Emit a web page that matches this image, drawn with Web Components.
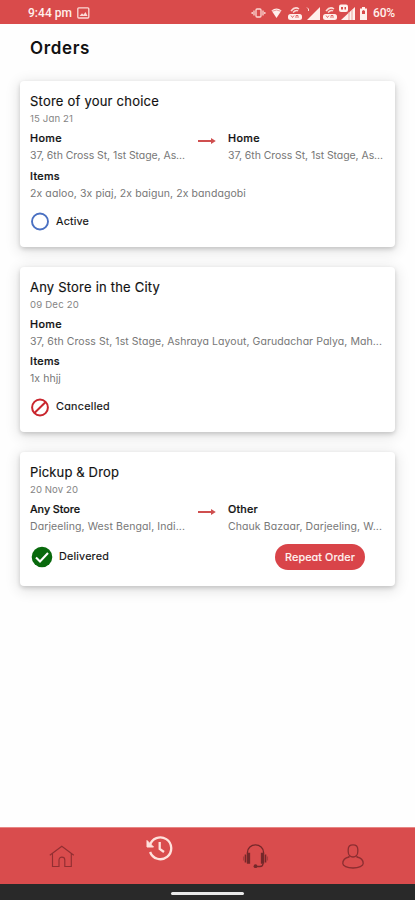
<!DOCTYPE html>
<html lang="en"><head><meta charset="utf-8"><title>Orders</title>
<style>
html,body{margin:0;height:100%;background:#fefefe}
body{font-family:Inter,"Open Sans",sans-serif;font-feature-settings:"cv11" 1;color:#111;overflow:hidden}
</style></head><body>
<orders-app></orders-app>
<script>
const define=(name,html,init)=>customElements.define(name,class extends HTMLElement{
  constructor(){super();this.attachShadow({mode:'open'}).innerHTML=html;}
  connectedCallback(){if(init)init.call(this);}
});

/* Single line of text, tracked to fill the width in the "w" attribute. */
define('track-text','<style>:host{display:block;white-space:nowrap}span{display:inline-block}</style><span></span>',function(){
  const s=this.shadowRoot.querySelector('span');s.textContent=this.getAttribute('text');
  const w=+this.getAttribute('w');
  if(w){this.style.width=w+'px';s.style.letterSpacing=((w-s.getBoundingClientRect().width)/s.textContent.length)+'px';}
});

define('status-bar',`<style>
:host{display:flex;height:24px;flex:none;background:#d94b4b;color:#fff0ec;align-items:center;padding:1px 20px 0 28px;box-sizing:border-box;font:500 12px Roboto,sans-serif}
svg{display:block;flex:none}.i{margin-left:5px}.sp{flex:1}.pct{margin-left:3px}
</style><track-text w="44" text="9:44 pm"></track-text>
<svg class="i" width="13" height="12" viewBox="0 0 13 12"><rect x=".8" y=".8" width="11" height="10.2" rx="1" fill="none" stroke="#fbd9d5" stroke-width="1.3"/><path d="M2.5 9 5 6.2l1.5 1.5L8.500 5 10.500 9z" fill="#fbd9d5"/></svg>
<span class="sp"></span>
<svg width="119" height="20" viewBox="0 0 119 20" fill="#fff0ec">
<g fill="none" stroke="#fbd9d5" stroke-width="1.3"><rect x="5" y="6" width="5" height="8" rx="1"/><path d="M3 7.500v5M12 7.500v5M1.200 9v2M13.800 9v2"/></g>
<path d="M20.500 7.500q5-4 10 0l-5 7.500z"/><path d="M21 8.300q4.500-2.500 9 0" stroke="#e99" fill="none"/>
<g id="v"><rect x="37" y="11" width="14" height="6" rx="2.500"/><path d="m40 12.500 1.500 2 1.500-2m2 2.500v-2.500h2v2.500" fill="none" stroke="#d94b4b" stroke-width=".8"/><path d="M40 8q4-5 8-2M42 9.500q3-3 5-1.500" fill="none" stroke="#fbd9d5" stroke-width="1.500"/></g>
<path d="M69 4v13H56z"/><path d="M56 4.500 57.500 6v2" stroke="#fbd9d5" fill="none"/>
<use href="#v" x="35"/>
<path d="M104 4v13H90z"/><path d="M98 9v8M101 7v10" stroke="#e9a09a"/><rect x="88" y="1.500" width="9" height="7.500" rx="2"/><path d="M90 4h2v2.500h-2zm3.500 0h1.500v2.500h-1.500z" fill="#d94b4b"/>
<path d="M109 5.500h2V4h3v1.500h2v11.500h-7z"/><path d="m111 8 1.500-1 1.500 1v3h-3z" fill="#d94b4b"/>
</svg><track-text class="pct" w="22" text="60%"></track-text>`);

define('status-icon','<style>:host{display:block}svg{display:block}</style><div></div>',function(){
  this.shadowRoot.querySelector('div').innerHTML={
  active:'<svg width="21" height="20"><circle cx="10" cy="10.500" r="8" fill="none" stroke="#4a70c2" stroke-width="1.900"/></svg>',
  cancelled:'<svg width="21" height="20"><g fill="none" stroke="#c9262e" stroke-width="2"><circle cx="10" cy="10.500" r="7.900"/><path d="M4.700 15.800 15.400 5.200"/></g></svg>',
  delivered:'<svg width="24" height="22"><circle cx="12" cy="11" r="10.300" fill="#08690c"/><path d="m6 11.500 4 4 8-8.500" fill="none" stroke="#fff" stroke-width="2.100"/></svg>'}[this.getAttribute('kind')];
});

/* A named address: bold label over a grey line. */
define('place-line',`<style>:host{display:block}.l{font:500 10.800px/16px Inter,sans-serif;font-feature-settings:"cv11" 1;-webkit-text-stroke:.2px #111}.a{font-size:10.500px;line-height:16px;margin-top:1px;color:#777}</style>
<div class="b"></div>`,function(){
  const g=n=>this.getAttribute(n);
  this.shadowRoot.querySelector('.b').innerHTML=`<track-text class="l" w="${g('lw')}" text="${g('label')}"></track-text><track-text class="a" w="${g('aw')}" text="${g('address')}"></track-text>`;
});

define('route-arrow','<style>:host{display:block}svg{display:block}</style><svg width="19" height="8"><path d="M0 2.900h13V.9l4.800 3.100L13 7.100V5.100H0z" fill="#cf4f4f"/></svg>');

define('order-card',`<style>
:host{display:flex;flex-direction:column;box-sizing:border-box;background:#fff;border-radius:4px;padding:10px 10px 0 10px;box-shadow:0 2px 4px rgba(0,0,0,.16),0 3px 14px 2px rgba(0,0,0,.11)}
.t{font-size:13px;line-height:20px;-webkit-text-stroke:.15px #111}.d{font-size:9.600px;line-height:15px;color:#858585}
::slotted([slot=route]){display:grid;grid-template-columns:168px 30px 1fr;margin-top:5px}
::slotted([slot=items]){margin-top:4.500px}
.s{display:flex;align-items:center;height:22px;margin-top:8.500px;font-size:10.800px;-webkit-text-stroke:.15px #111}
:host([kind=delivered]) .s{margin-top:11px}
.s track-text{margin-left:5px}
::slotted([slot=action]){margin-left:auto;margin-right:20px;position:relative;top:.5px}
</style><track-text class="t"></track-text><track-text class="d"></track-text>
<slot name="route"></slot><slot name="items"></slot>
<div class="s"><status-icon></status-icon><track-text></track-text><slot name="action"></slot></div>`);

define('pill-button',`<style>:host{display:flex;align-items:center;justify-content:center;width:90px;height:26px;border-radius:13px;background:#d94449;color:#fff1ef;font-weight:500;font-size:10.800px;-webkit-text-stroke:.1px #fff1ef}</style><track-text w="70" text="Repeat Order"></track-text>`);

define('nav-bar',`<style>
:host{display:grid;grid-template-columns:repeat(4,1fr);height:57px;flex:none;box-sizing:border-box;border-top:1px solid #e78684;background:#d94c4d;padding:0 14px 0 13px}
div{display:flex;justify-content:center;padding-top:16px}div.on{padding-top:7px}svg{display:block}
</style>
<div><svg width="26" height="26" viewBox="0 0 26 26" fill="none" stroke="#922f32" stroke-width="1.150"><path d="m.8 11.200 12-9 12 9M3.500 9.500v13H10v-6.500a2.900 2.900 0 0 1 5.800 0v6.500h6.500v-13"/></svg></div>
<div class="on"><svg width="28" height="28" viewBox="0 0 28 28" fill="none" stroke="#ffe1dc" stroke-width="2.300"><path d="M4.800 10.500a10.900 10.900 0 1 1 .3 6.500M14.700 7v6.800l4.300 3.200"/><path d="M2 5.500v6.500h6.500z" fill="#ffe1dc" stroke-width="1"/></svg></div>
<div><svg width="27" height="27" viewBox="0 0 27 27" fill="none" stroke="#75282a" stroke-width="1.300"><path d="M5.500 10V8.300a8 7.500 0 0 1 16 0V10"/><path d="M5.500 9.500h2v9.500h-2zM19.500 9.500h2v9.500h-2z" fill="#75282a"/><path d="M3.500 10.500v8M23.500 10.500v8" stroke-width="1.600"/><path d="M1.600 12.500v4M25.400 12.500v4" stroke="#ac3b3d"/><path d="M21 19.500q0 3-3 3h-4"/><circle cx="13.500" cy="22.200" r="1.900" fill="#75282a" stroke="none"/></svg></div>
<div><svg width="24" height="26" viewBox="0 0 24 26" fill="none" stroke="#8c2e31" stroke-width="1.300"><path d="M12 .9c3 0 4.800 1.700 4.800 4.600v2.100c0 3.200-2.100 5.400-4.800 5.400s-4.800-2.200-4.800-5.400V5.500C7.200 2.600 9 .9 12 .9z"/><path d="M8 12v1c-4 .8-6.200 3.200-6.200 6.500 0 2.200 4.200 4.500 10.200 4.500s10.200-2.300 10.200-4.500c0-3.300-2.200-5.700-6.200-6.500v-1"/></svg></div>`);

define('gesture-bar','<style>:host{display:flex;height:16px;flex:none;background:#292929;justify-content:center;align-items:center}i{width:73px;height:3px;border-radius:2px;background:#e9e9e9;margin-top:2px}</style><i></i>');

const orders=[
 {t:'Store of your choice',tw:129,d:'15 Jan 21',dw:43,h:166,
  from:['Home',32,'37, 6th Cross St, 1st Stage, As...',155],to:['Home',32,'37, 6th Cross St, 1st Stage, As...',155],
  items:['Items',30,'2x aaloo, 3x piaj, 2x baigun, 2x bandagobi',216],k:'active',s:'Active',sw:33},
 {t:'Any Store in the City',tw:130,d:'09 Dec 20',dw:49,h:165.5,
  from:['Home',32,'37, 6th Cross St, 1st Stage, Ashraya Layout, Garudachar Palya, Mah...',352],
  items:['Items',30,'1x hhjj',31],k:'cancelled',s:'Cancelled',sw:54},
 {t:'Pickup & Drop',tw:89,d:'20 Nov 20',dw:48,h:134,
  from:['Any Store',50,'Darjeeling, West Bengal, Indi...',155],to:['Other',30,'Chauk Bazaar, Darjeeling, W...',154],
  k:'delivered',s:'Delivered',sw:50,btn:true}];
const place=p=>`<place-line label="${p[0]}" lw="${p[1]}" address="${p[2]}" aw="${p[3]}"></place-line>`;

define('orders-app',`<style>
:host{display:flex;flex-direction:column;height:900px;width:415px}
header{height:46px;padding:1px 0 0 30px;box-sizing:border-box;display:flex;align-items:center;font-weight:600;font-size:17px;color:#111}
main{flex:1;display:flex;flex-direction:column;gap:19.500px;padding:11px 20px 0 20px}
route-arrow{margin-top:6px}
</style><status-bar></status-bar><header><track-text w="60" text="Orders"></track-text></header><main></main><nav-bar></nav-bar><gesture-bar></gesture-bar>`,function(){
  const m=this.shadowRoot.querySelector('main');
  for(const o of orders){
    const c=document.createElement('order-card');c.style.height=o.h+'px';c.setAttribute('kind',o.k);
    const r=c.shadowRoot;
    const set=(e,t,w)=>{const n=document.createElement('track-text');n.className=e.className;n.setAttribute('text',t);n.setAttribute('w',w);e.replaceWith(n);};
    set(r.querySelector('.t'),o.t,o.tw);set(r.querySelector('.d'),o.d,o.dw);
    set(r.querySelector('.s track-text'),o.s,o.sw);
    const si=document.createElement('status-icon');si.setAttribute('kind',o.k);r.querySelector('status-icon').replaceWith(si);
    c.innerHTML=`<div slot="route">${place(o.from)}${o.to?'<route-arrow></route-arrow>'+place(o.to):''}</div>`
      +(o.items?`<div slot="items">${place(o.items)}</div>`:'')+(o.btn?'<pill-button slot="action"></pill-button>':'');
    m.append(c);
  }
});
</script></body></html>
